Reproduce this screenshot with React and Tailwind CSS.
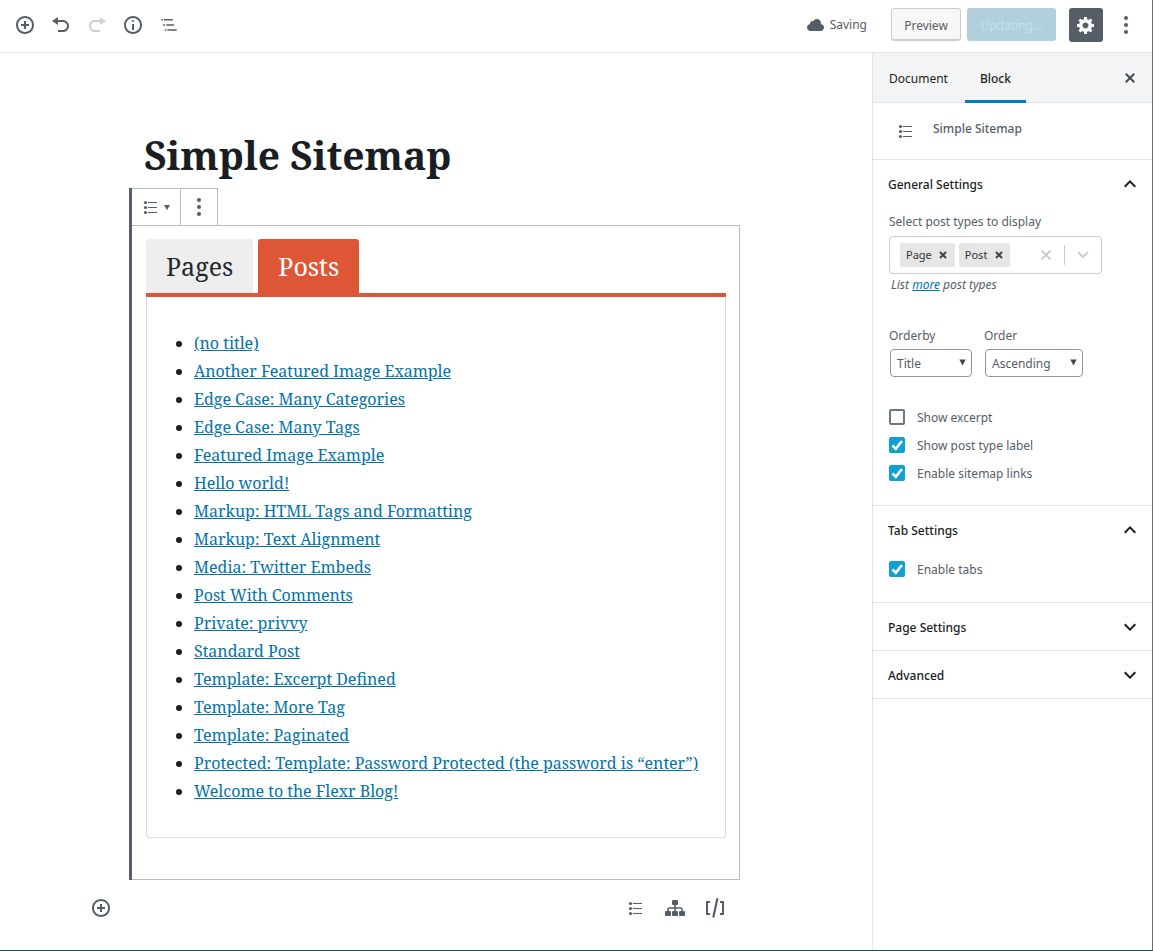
import React, {useState} from 'react';

const posts = [
  '(no title)',
  'Another Featured Image Example',
  'Edge Case: Many Categories',
  'Edge Case: Many Tags',
  'Featured Image Example',
  'Hello world!',
  'Markup: HTML Tags and Formatting',
  'Markup: Text Alignment',
  'Media: Twitter Embeds',
  'Post With Comments',
  'Private: privvy',
  'Standard Post',
  'Template: Excerpt Defined',
  'Template: More Tag',
  'Template: Paginated',
  'Protected: Template: Password Protected (the password is “enter”)',
  'Welcome to the Flexr Blog!'
];

const paths = {
  insert: 'M10 1c-5 0-9 4-9 9s4 9 9 9 9-4 9-9-4-9-9-9zm0 16c-3.9 0-7-3.1-7-7s3.1-7 7-7 7 3.1 7 7-3.1 7-7 7zm1-11H9v3H6v2h3v3h2v-3h3V9h-3V6z',
  undo: 'M12 5H7V2L1 6l6 4V7h5c2.2 0 4 1.8 4 4s-1.8 4-4 4H7v2h5c3.3 0 6-2.7 6-6s-2.7-6-6-6z',
  redo: 'M8 5h5V2l6 4-6 4V7H8c-2.2 0-4 1.8-4 4s1.8 4 4 4h5v2H8c-3.3 0-6-2.7-6-6s2.7-6 6-6z',
  info: 'M9 15h2V9H9v6zm1-10c-.5 0-1 .5-1 1s.5 1 1 1 1-.5 1-1-.5-1-1-1zm0-4c-5 0-9 4-9 9s4 9 9 9 9-4 9-9-4-9-9-9zm0 16c-3.9 0-7-3.1-7-7s3.1-7 7-7 7 3.1 7 7-3.1 7-7 7z',
  outline: 'M2.4 4H4v1.6H2.4zM5 4h8.7v1.6H5zM4.3 9.2H6v1.6H4.3zM7.3 9.2H15v1.6H7.3zM5.7 14.2h1.7v1.6H5.7zM8.4 14.2h9.3v1.6H8.4z',
  cloud: 'M14.9 9c1.8.2 3.1 1.7 3.1 3.5 0 1.9-1.6 3.5-3.5 3.5h-10C2.6 16 1 14.4 1 12.5 1 10.7 2.3 9.3 4.1 9 4 8.9 4 8.7 4 8.5 4 7.1 5.1 6 6.5 6c.3 0 .7.1.9.2C8.1 4.9 9.4 4 11 4c2.2 0 4 1.8 4 4 0 .4-.1.7-.1 1z',
  gear: 'M18 12h-2.18c-.17.7-.44 1.35-.81 1.93l1.54 1.54-2.1 2.1-1.54-1.54c-.58.36-1.23.63-1.91.79V19H8v-2.18c-.68-.16-1.33-.43-1.91-.79l-1.54 1.54-2.12-2.12 1.54-1.54c-.36-.58-.63-1.23-.79-1.91H1V9.03h2.17c.16-.7.44-1.35.8-1.94L2.43 5.55l2.1-2.1 1.54 1.54c.58-.37 1.24-.64 1.93-.81V2h3v2.18c.68.16 1.33.43 1.91.79l1.54-1.54 2.12 2.12-1.54 1.54c.36.59.64 1.24.8 1.94H18V12zm-8.5 1.5c1.66 0 3-1.34 3-3s-1.34-3-3-3-3 1.34-3 3 1.34 3 3 3z',
  close: 'M14.95 6.46L11.41 10l3.54 3.54-1.41 1.41L10 11.42l-3.53 3.53-1.42-1.42L8.58 10 5.05 6.47l1.42-1.42L10 8.58l3.54-3.53z',
  shortcode: 'M1 3h4v2H3v10h2v2H1zM19 3h-4v2h2v10h-2v2h4zM11.3.3h2.2l-4.1 19.2H7.2z'
};

const Icon = ({name}) => (
  <svg width="20" height="20" viewBox="0 0 20 20" fill="currentColor" aria-hidden="true">
    <path d={paths[name]} />
  </svg>
);

const ListIcon = () => (
  <svg width="20" height="20" viewBox="0 0 20 20" fill="currentColor" aria-hidden="true">
    <circle cx="5.5" cy="5.5" r="1.6" />
    <circle cx="5.5" cy="10.5" r="1.6" />
    <circle cx="5.5" cy="15.5" r="1.6" />
    <path d="M8 5h9v1H8zM8 10h9v1H8zM8 15h9v1H8z" />
  </svg>
);

const SitemapIcon = () => (
  <svg width="20" height="20" viewBox="0 0 20 20" fill="currentColor" aria-hidden="true">
    <rect x="7" y="2" width="6" height="5" rx="1" />
    <rect x="0" y="13" width="6" height="5" rx="1" />
    <rect x="7" y="13" width="6" height="5" rx="1" />
    <rect x="14" y="13" width="6" height="5" rx="1" />
    <path d="M10 6v8M3 14v-2.500q0-1.500 1.500-1.500h11q1.500 0 1.500 1.500V14" fill="none" stroke="currentColor" strokeWidth="1.6" />
  </svg>
);

const DotsIcon = () => (
  <svg width="20" height="20" viewBox="0 0 20 20" fill="currentColor" aria-hidden="true">
    <circle cx="10" cy="3" r="2" />
    <circle cx="10" cy="10" r="2" />
    <circle cx="10" cy="17" r="2" />
  </svg>
);

const Chevron = ({up}) => (
  <svg width="24" height="24" viewBox="0 0 24 24" fill="currentColor" aria-hidden="true">
    <path d={up ? 'M7.41 15.41L12 10.83l4.59 4.58L18 14l-6-6-6 6z' : 'M7.41 8.59L12 13.17l4.59-4.58L18 10l-6 6-6-6z'} />
  </svg>
);

const IconButton = ({label, children, disabled}) => (
  <button aria-label={label} disabled={disabled} className="w-9 h-9 flex items-center justify-center disabled:text-[#cdcfd2]">
    {children}
  </button>
);

const Panel = ({title, children}) => {
  const [open, setOpen] = useState(Boolean(children));

  return (
    <section className="border-b border-[#e2e4e7]">
      <h2>
        <button
          onClick={() => setOpen(!open)}
          aria-expanded={open}
          className="w-full h-[47px] pl-[15px] pr-[10px] flex items-center justify-between text-[#191e23] font-medium"
        >
          <span className="pt-0.5">{title}</span>
          <Chevron up={open} />
        </button>
      </h2>
      {open && children}
    </section>
  );
};

const Checkbox = ({label, defaultChecked}) => (
  <label className="flex items-center gap-3 h-7">
    <span className="relative flex">
      <input
        type="checkbox"
        defaultChecked={defaultChecked}
        className="peer appearance-none w-4 h-4 border-2 border-[#6c7781] rounded-xs checked:bg-[#11a0d2] checked:border-[#11a0d2]"
      />
      <svg className="absolute inset-0 hidden peer-checked:block pointer-events-none" width="16" height="16" viewBox="0 0 16 16" fill="none" stroke="#fff" strokeWidth="2.6" aria-hidden="true">
        <path d="M3.5 8.5l3.3 3.2L13 4" />
      </svg>
    </span>
    <span className="pt-px">{label}</span>
  </label>
);

const Select = ({id, label, options, width}) => (
  <div>
    <label htmlFor={id} className="block h-5 leading-5">{label}</label>
    <div className={`relative mt-[3px] ml-px ${width}`}>
      <select id={id} className="appearance-none w-full h-7 pl-1.5 pt-0.5 border border-[#8d96a0] rounded bg-white">
        {options.map(option => <option key={option}>{option}</option>)}
      </select>
      <svg className="absolute right-1.5 top-2.5 pointer-events-none" width="7" height="7" viewBox="0 0 7 7" fill="#40464d" aria-hidden="true">
        <path d="M.3.5h6.4L3.5 6.5z" />
      </svg>
    </div>
  </div>
);

const Tag = ({name}) => (
  <span className="h-6 pl-1.5 flex items-center rounded-xs bg-[#e6e6e6] text-[11px] text-[#333]">
    {name}
    <button aria-label={`Remove ${name}`} className="w-[23px] h-6 flex items-center justify-center text-[#444]">
      <svg width="8" height="8" viewBox="0 0 8 8" stroke="currentColor" strokeWidth="2" aria-hidden="true">
        <path d="M1 1l6 6M7 1L1 7" />
      </svg>
    </button>
  </span>
);

const Header = () => (
  <header className="flex items-center justify-between h-[53px] pb-[3px] pl-[7px] pr-2 border-b border-[#e2e4e7]">
    <div className="flex">
      <IconButton label="Add block"><Icon name="insert" /></IconButton>
      <IconButton label="Undo"><Icon name="undo" /></IconButton>
      <IconButton label="Redo" disabled><Icon name="redo" /></IconButton>
      <IconButton label="Content structure"><Icon name="info" /></IconButton>
      <IconButton label="Block navigation"><Icon name="outline" /></IconButton>
    </div>
    <div className="flex items-center">
      <span className="mr-6 flex items-center gap-1"><Icon name="cloud" /><span className="pt-px">Saving</span></span>
      <button className="w-[70px] h-[33px] pt-0.5 mr-1.5 border border-[#ccc] rounded-[3px] bg-[#f7f7f7] shadow-[inset_0_-1px_0_#ccc]">Preview</button>
      <button disabled className="w-[89px] h-[33px] pt-0.5 mr-[13px] rounded-[3px] bg-[#b2cfdd] text-[#c5e2ef]">Updating...</button>
      <button aria-label="Settings" className="w-[34px] h-[34px] mr-[5px] flex items-center justify-center rounded-[3px] bg-[#555d66] text-white">
        <Icon name="gear" />
      </button>
      <IconButton label="More tools"><DotsIcon /></IconButton>
    </div>
  </header>
);

const Editor = () => {
  const [tab, setTab] = useState('Posts');

  const tabClass = name =>
    tab === name ? 'bg-[#dd5737] text-white' : 'bg-[#eee] text-[#23282d]';

  return (
    <main className="flex-1 min-w-0 pt-[72px] pr-[3px]">
      <div className="max-w-[703px] mx-auto">
        <div className="px-[46px] font-['Noto_Serif','Droid_Serif','DejaVu_Serif',serif] text-[#191e23]">
          <h1 className="ml-[15px] h-[63px] leading-[60px] text-[39px] font-bold whitespace-nowrap">Simple Sitemap</h1>
          <div className="border-l-3 border-[#555d6e]">
            <div className="flex h-[37px] w-fit border-t border-r border-[#b5bcc2] text-[#555d66]">
              <button aria-label="Change block type" className="w-[49px] pr-0.5 flex items-center justify-center gap-1 border-r border-[#b5bcc2]">
                <ListIcon />
                <svg width="6" height="5" viewBox="0 0 6 5" fill="currentColor" aria-hidden="true"><path d="M0 0h6L3 5z" /></svg>
              </button>
              <button aria-label="More options" className="w-9 flex items-center justify-center"><DotsIcon /></button>
            </div>
            <div className="border border-l-0 border-[#b5bcc2] pt-[13px] pl-3.5 pr-[13px] pb-[41px]">
              <div className="flex gap-[5px] border-b-4 border-[#dd5737]">
                {['Pages', 'Posts'].map(name => (
                  <button key={name} onClick={() => setTab(name)} className={`h-[54px] px-5 pt-0.5 rounded-t-[3px] text-[25px] ${tabClass(name)}`}>
                    {name}
                  </button>
                ))}
              </div>
              <div className="border border-t-0 border-[#ddd] rounded-b-[3px] py-8 pl-[47px]">
                <ul className="list-disc text-base leading-7">
                  {posts.map(post => (
                    <li key={post}><a href="#" className="text-[#0073aa] underline">{post}</a></li>
                  ))}
                </ul>
              </div>
            </div>
          </div>
        </div>
        <div className="flex justify-between pt-2.5 pr-[53px] text-[#555d66]">
          <IconButton label="Add block"><Icon name="insert" /></IconButton>
          <div className="flex gap-1">
            <IconButton label="Insert sitemap list"><ListIcon /></IconButton>
            <IconButton label="Insert sitemap group"><SitemapIcon /></IconButton>
            <IconButton label="Insert shortcode"><Icon name="shortcode" /></IconButton>
          </div>
        </div>
      </div>
    </main>
  );
};

const Sidebar = () => (
  <aside className="w-[280px] shrink-0 border-l border-[#e2e4e7]">
    <div className="flex items-stretch h-[50px] pr-1 bg-[#f3f4f5] border-b border-[#e2e4e7] text-[#191e23]">
      <button className="px-4 pt-0.5">Document</button>
      <button className="ml-px -mb-px px-[15px] pt-1 border-b-3 border-[#007cba] font-medium">Block</button>
      <button aria-label="Close settings" className="ml-auto w-9 flex items-center justify-center text-[#444b53]">
        <Icon name="close" />
      </button>
    </div>
    <div className="flex h-[57px] pl-[22px] border-b border-[#e2e4e7]">
      <span className="pt-[18px]"><ListIcon /></span>
      <span className="pl-[18px] pt-4 leading-5 font-medium">Simple Sitemap</span>
    </div>

    <Panel title="General Settings">
      <div className="px-4 pt-1 pb-[18px]">
        <label htmlFor="post-types" className="block h-[22px] leading-[22px]">Select post types to display</label>
        <div className="mt-[3px] w-[213px] h-[38px] pl-2.5 flex items-center gap-1 border border-[#ccc] rounded">
          <Tag name="Page" />
          <Tag name="Post" />
          <div className="flex-1 flex items-center justify-end min-w-0">
            <input id="post-types" className="flex-1 min-w-0 outline-none" />
            <button aria-label="Clear" className="w-9 shrink-0 flex justify-center text-[#ccc]">
              <svg width="10" height="10" viewBox="0 0 10 10" stroke="currentColor" strokeWidth="2" aria-hidden="true"><path d="M.5.5l9 9M9.5.5l-9 9" /></svg>
            </button>
            <span className="w-px h-5 shrink-0 bg-[#ccc]" />
            <button aria-label="Open" className="w-9 shrink-0 flex justify-center text-[#ccc]">
              <svg width="12" height="8" viewBox="0 0 12 8" fill="none" stroke="currentColor" strokeWidth="2" aria-hidden="true"><path d="M1 1l5 5 5-5" /></svg>
            </button>
          </div>
        </div>
        <p className="pl-0.5 h-6 leading-[22px] italic">List <a href="#" className="text-[#0073aa] underline">more</a> post types</p>

        <div className="mt-7 mb-[26px] flex gap-3">
          <Select id="orderby" label="Orderby" options={['Title', 'Date', 'Author']} width="w-[82px]" />
          <Select id="order" label="Order" options={['Ascending', 'Descending']} width="w-[98px]" />
        </div>

        <Checkbox label="Show excerpt" />
        <Checkbox label="Show post type label" defaultChecked />
        <Checkbox label="Enable sitemap links" defaultChecked />
      </div>
    </Panel>
    <Panel title="Tab Settings">
      <div className="px-4 pt-0.5 pb-[19px]">
        <Checkbox label="Enable tabs" defaultChecked />
      </div>
    </Panel>
    <Panel title="Page Settings" />
    <Panel title="Advanced" />
  </aside>
);

const App = () => (
  <div className="min-h-screen flex flex-col bg-white border-r border-r-[#6b6f74] border-b border-b-[#1d4a50] font-['Segoe_UI','Noto_Sans',sans-serif] text-[12px] text-[#555d66]">
    <Header />
    <div className="flex flex-1">
      <Editor />
      <Sidebar />
    </div>
  </div>
);

export default App;
